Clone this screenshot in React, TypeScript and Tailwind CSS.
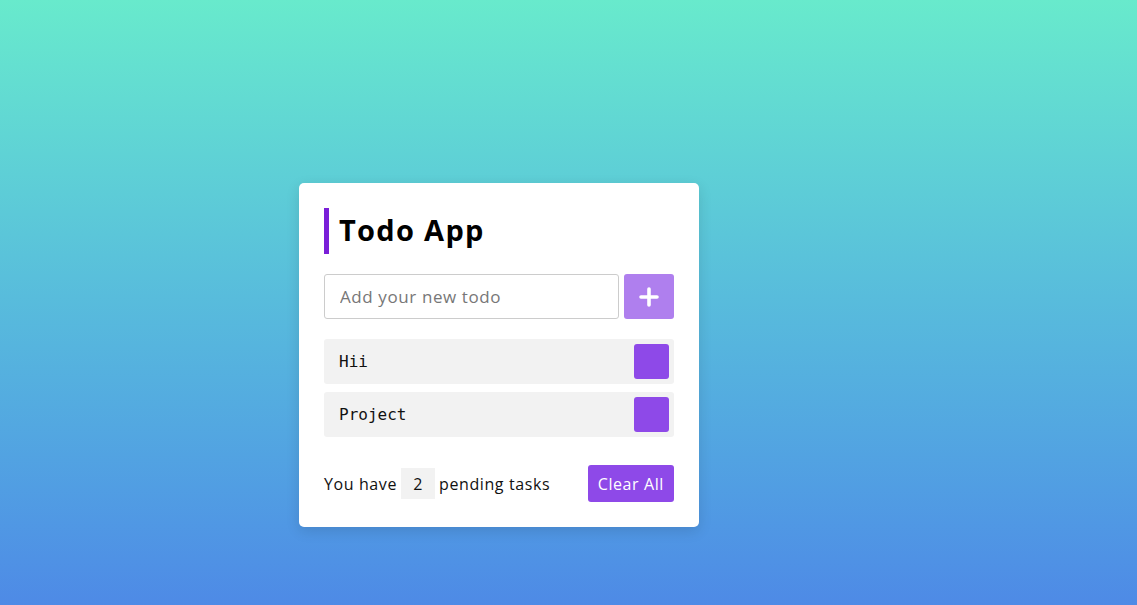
import React from "react";

export default function App() {
  const todos = ["Hii", "Project"];
  return (
    <div
      className="min-h-[605px] w-full bg-gradient-to-b from-[#68EACC] to-[#4E8AE6] pl-[299px] pt-[183px]"
      style={{ fontFamily: '"Open Sans", "Liberation Sans", sans-serif' }}
    >
      <div className="w-[400px] rounded-[5px] bg-white p-[25px] shadow-[0_4px_14px_rgba(0,0,0,0.12)]">
        <h1 className="flex h-[46px] items-center border-l-[5px] border-[#7A1FD8] pb-[3px] pl-[10px] text-[29px] font-bold leading-none tracking-[1.3px] text-black">
          Todo App
        </h1>
        <div className="mt-[20px] flex h-[45px] gap-[5px]">
          <input
            className="h-full w-[295px] rounded-[3px] border border-[#cccccc] pl-[15px] text-[17px] tracking-[0.6px] text-[#333] outline-none placeholder:text-[#777]"
            placeholder="Add your new todo"
          />
          <button className="flex h-full w-[50px] items-center justify-center rounded-[3px] bg-[#8E49E8] opacity-70">
            <svg width="20" height="20" viewBox="0 0 20 20">
              <path d="M10 2v16M2 10h16" stroke="white" strokeWidth="3.6" strokeLinecap="round" />
            </svg>
          </button>
        </div>
        <ul className="mt-[20px] flex flex-col gap-[8px]">
          {todos.map((t) => (
            <li
              key={t}
              className="flex h-[45px] items-center justify-between rounded-[3px] bg-[#f2f2f2] pl-[15px] pr-[5px]"
            >
              <span className="text-[16px] text-[#111]" style={{ fontFamily: '"DejaVu Sans Mono", monospace' }}>
                {t}
              </span>
              <span className="h-[35px] w-[35px] rounded-[3px] bg-[#8E49E8]" />
            </li>
          ))}
        </ul>
        <div className="mt-[28px] flex h-[37px] items-center justify-between text-[16px] tracking-[0.6px] text-[#111]">
          <div className="flex items-center">
            <span>You have</span>
            <span className="mx-[4px] flex h-[31px] w-[34px] items-center justify-center bg-[#f2f2f2]">2</span>
            <span>pending tasks</span>
          </div>
          <button className="h-[37px] rounded-[3px] bg-[#8E49E8] px-[10px] text-[16px] tracking-[0.6px] text-white">
            Clear All
          </button>
        </div>
      </div>
    </div>
  );
}
